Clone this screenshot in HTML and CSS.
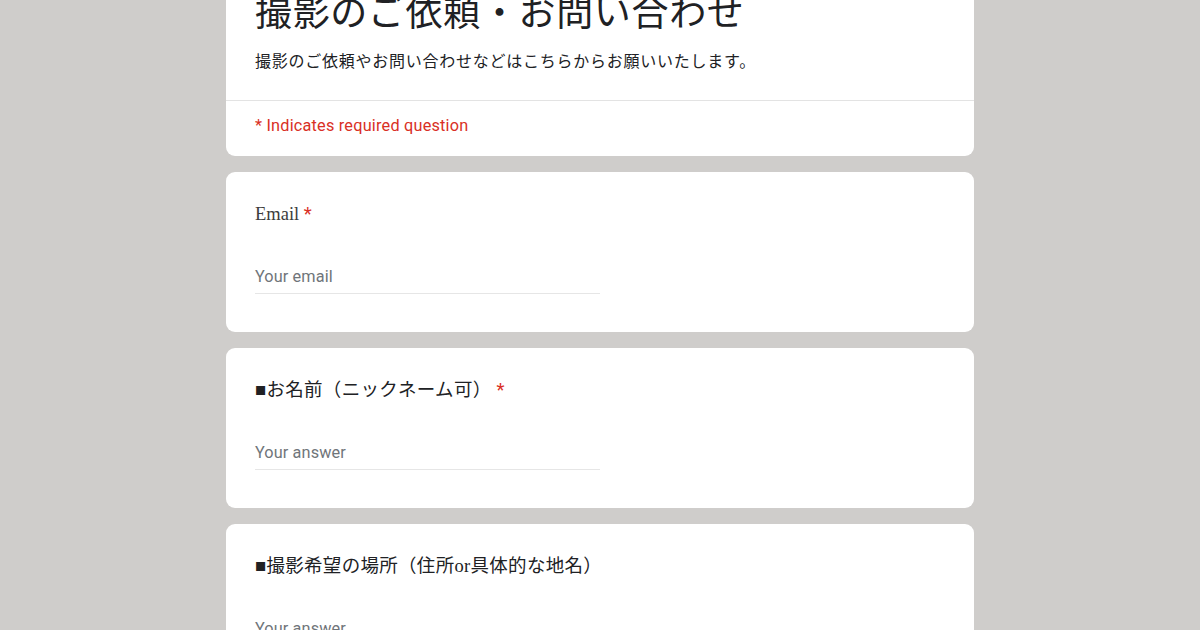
FILE: index.html
```html
<!DOCTYPE html>
<html lang="ja">
<head>
<meta charset="utf-8">
<title>撮影のご依頼・お問い合わせ</title>
<link rel="stylesheet" href="styles.css">
</head>
<body>
<div class="form">
  <div class="card header-card">
    <div class="header-main">
      <h1 class="title">撮影のご依頼・お問い合わせ</h1>
      <p class="desc">撮影のご依頼やお問い合わせなどはこちらからお願いいたします。</p>
    </div>
    <div class="required-note">* Indicates required question</div>
  </div>

  <div class="card question">
    <div class="label label-latin">Email <span class="req">*</span></div>
    <div class="input"><span class="placeholder">Your email</span></div>
  </div>

  <div class="card question">
    <div class="label">■お名前（ニックネーム可） <span class="req">*</span></div>
    <div class="input"><span class="placeholder">Your answer</span></div>
  </div>

  <div class="card question">
    <div class="label">■撮影希望の場所（住所or具体的な地名）</div>
    <div class="input"><span class="placeholder">Your answer</span></div>
  </div>
</div>
</body>
</html>
```

FILE: styles.css
```css
html, body {
  margin: 0;
  padding: 0;
}
body {
  background: #cfcdcb;
  font-family: "Noto Sans CJK JP", "Noto Sans", sans-serif;
  color: #202124;
  overflow: hidden;
  height: 630px;
}
.form {
  width: 748px;
  margin: 0 auto;
  display: flex;
  flex-direction: column;
  gap: 16px;
}
.card {
  background: #ffffff;
  border-radius: 9px;
}
.header-card {
  margin-top: -50px;
}
.header-main {
  padding: 36px 29px 28px;
  border-bottom: 1px solid #e3e3e3;
}
.title {
  margin: 0;
  font-family: "Noto Sans CJK JP", sans-serif;
  font-weight: 400;
  font-size: 37px;
  line-height: 48px;
  letter-spacing: 0.65px;
  color: #202124;
}
.desc {
  margin: 14px 0 0;
  font-size: 16px;
  line-height: 24px;
  letter-spacing: 0.75px;
  color: #202124;
}
.required-note {
  padding: 13px 29px 18px;
  font-family: Roboto, "Liberation Sans", sans-serif;
  font-size: 16.3px;
  line-height: 24px;
  letter-spacing: 0.2px;
  color: #d93025;
}
.question {
  padding: 28px 29px 38px;
}
.label {
  font-family: "Liberation Serif", "Noto Sans CJK JP", serif;
  font-size: 18.5px;
  line-height: 28px;
  letter-spacing: 0.3px;
  color: #202124;
}
.label-latin {
  letter-spacing: 0;
  color: #3c3c3c;
}
.label .req {
  font-family: Roboto, "Liberation Sans", sans-serif;
  color: #d93025;
}
.input {
  margin-top: 37px;
  width: 345px;
  padding-bottom: 4px;
  border-bottom: 1px solid #e6e6e6;
}
.placeholder {
  display: block;
  font-family: Roboto, "Liberation Sans", sans-serif;
  font-size: 16.3px;
  line-height: 24px;
  letter-spacing: 0.1px;
  color: #70757a;
}
```
